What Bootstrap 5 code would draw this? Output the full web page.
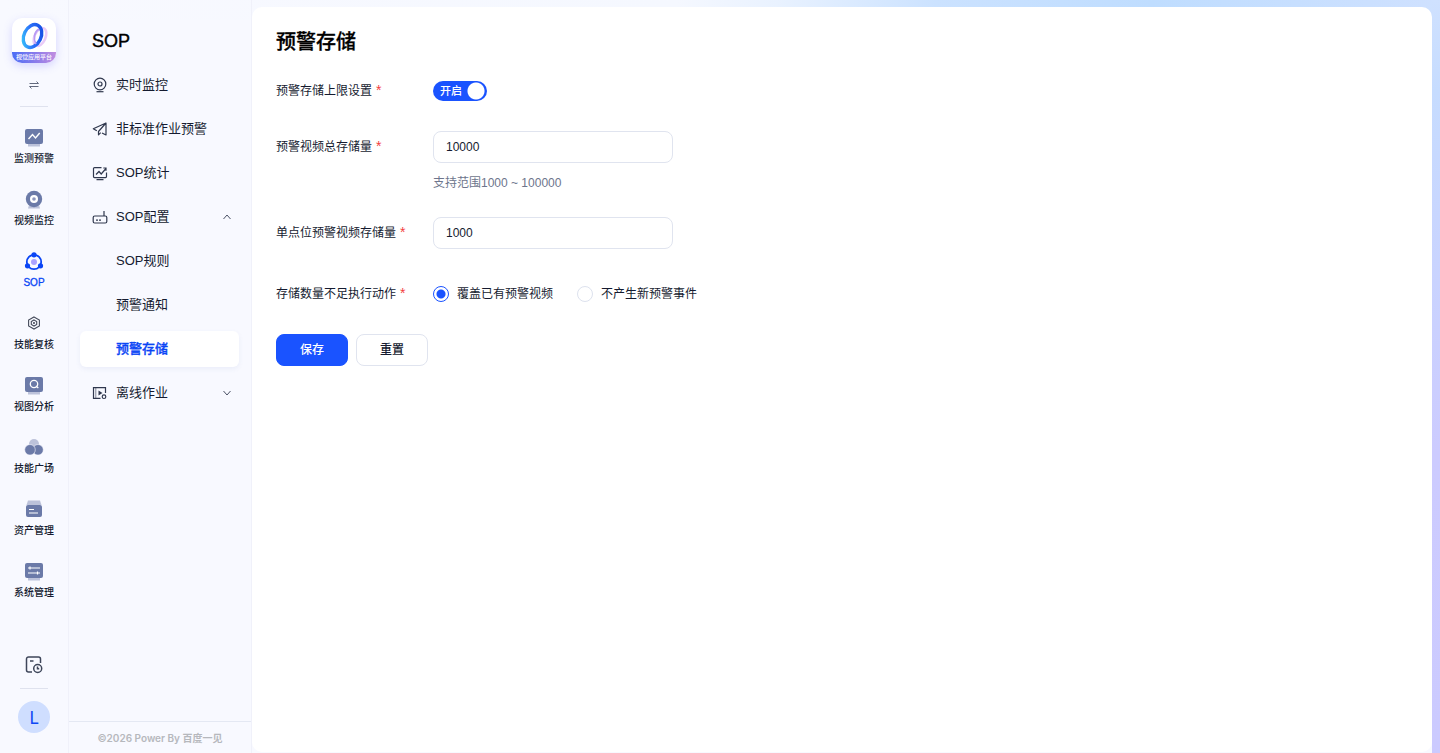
<!DOCTYPE html>
<html lang="zh-CN">
<head>
<meta charset="utf-8">
<meta name="viewport" content="width=device-width, initial-scale=1">
<title>预警存储</title>
<link href="https://cdn.jsdelivr.net/npm/bootstrap@5.3.0/dist/css/bootstrap.min.css" rel="stylesheet">
<style>
:root{--brand:#1a53ff;--brand-ink:#0a45f5;--ink:#151b30;--line:#e4e8f3}
body{font-family:"Liberation Sans","Noto Sans CJK SC",sans-serif;font-size:12px;line-height:20px;color:var(--ink);
background:linear-gradient(180deg,#cfe1ff 0,#c6dcff 12%,#cccbff 60%,#cbcaff 100%) right top/8px 100% no-repeat,
linear-gradient(90deg,#f8f9ff 0,#f5f8ff 47%,#e9f2ff 54%,#cbe2ff 65%,#bfddff 80%,#cfe1ff 100%) top/100% 20px no-repeat,#f8f9ff}
a{color:inherit;text-decoration:none}
svg{display:block;flex:none}
.rail{width:68px;padding-top:18px;padding-bottom:20px}
.logo{width:44px;height:45px;border-radius:10px;background:#fff;overflow:hidden;box-shadow:0 3px 8px #6f6cff40}
.logo-band{height:11px;font-size:6px;line-height:11px;font-weight:500;color:#fff;background:linear-gradient(90deg,#4b6df6,#8c7bea 55%,#c18ee0)}
.rule{width:28px;height:1px;background:#dfe2ee}
.swap{padding:0;border:0;background:none}
.swap-top{margin:16px 0 15px}
.rail-list{margin-top:11px}
.rail-item{height:62px;gap:2px;padding-top:9px;font-size:10px;font-weight:500}
.rail-item.active{color:var(--brand-ink);-webkit-text-stroke:.3px}
.avatar{width:32px;height:32px;margin-top:12px;border-radius:50%;background:#cfdeff;color:#0d47f5;font:18px/32px "Noto Sans","Noto Sans CJK SC",sans-serif;border:0;padding:0}
.side,.sheet{min-width:0}
.side{width:184px;border:solid #f0f1fa;border-width:0 1px}
.side-title{font-size:18px;line-height:28px;font-weight:400;color:#000;margin:27px 0 12px 23px;-webkit-text-stroke:.4px}
.menu-item{height:36px;margin:0 12px 0 11px;padding:0 7px 0 12px;gap:8px;font-size:13px;border-radius:6px}
.menu-item.sub{padding-left:36px}
.menu-item.active{background:#fff;color:var(--brand-ink);font-weight:500;box-shadow:0 2px 5px #5068b414;-webkit-text-stroke:.3px}
.foot{height:32px;border-top:1px solid var(--line);font:600 10px/32px Inter,"Noto Sans CJK SC",sans-serif;color:#b6b8bd}
.sheet{background:#fff;border-radius:10px;margin:7px 8px 1px 0;padding:20px 24px}
.sheet h1{font-size:20px;line-height:30px;font-weight:500;color:#000;margin:0 0 18px;-webkit-text-stroke:.3px}
.form-row{margin-bottom:24px}
.form-row.tall{margin-bottom:29px}
.row-label{width:157px;height:32px;line-height:32px}
.req{color:#f33e3e;margin-left:4px;font-size:14px;line-height:1}
.field-box.form-control{width:240px;height:32px;font-size:12px;line-height:20px;padding:5px 12px;border:1px solid #e0e4ef;border-radius:8px;color:var(--ink)}
.hint{color:#6d758c;margin-top:10px}
.toggle{width:54px;height:20px;margin:6px 0}
.toggle input{appearance:none;width:54px;height:20px;border-radius:10px;margin:0;display:block;background:#b8becf radial-gradient(circle at 11px 10px,#fff 8px,#fff0 9px)}
.toggle input:checked{background:var(--brand) radial-gradient(circle at 43px 10px,#fff 8px,#fff0 9px)}
.toggle span{left:7px;top:0;font-size:11px;color:#fff;font-weight:500;pointer-events:none}
.choice{gap:8px;height:32px;margin-right:24px}
.choice input{appearance:none;width:16px;height:16px;margin:0;border:1px solid #dde2ee;border-radius:50%}
.choice input:checked{border-color:var(--brand);background:radial-gradient(circle,var(--brand) 4px,#fff 5px)}
.act.btn{width:72px;height:32px;font-size:12px;line-height:20px;padding:5px;border-radius:8px;font-weight:500}
.act-main.btn{background:var(--brand);border-color:var(--brand);color:#fff}
.act-alt.btn{background:#fff;border-color:#e0e4ef;color:var(--ink)}
</style>
</head>
<body>
<div class="d-flex min-vh-100">
<nav class="rail d-flex flex-column align-items-center flex-shrink-0" aria-label="应用">
  <a href="#" class="logo d-flex flex-column justify-content-between text-center">
    <svg width="44" height="34" viewBox="0 0 44 34" fill="none"><defs><linearGradient id="lg" x1="0" y1="1" x2="1" y2="0"><stop stop-color="#37d0fa"/><stop offset=".45" stop-color="#2c72fa"/><stop offset="1" stop-color="#1149df"/></linearGradient></defs><ellipse cx="28" cy="19" rx="5.500" ry="9.500" transform="rotate(24 28 19)" stroke="#e9cbf7" stroke-width="2.600"/><ellipse cx="20.500" cy="18" rx="8.500" ry="12" transform="rotate(26 20.500 18)" stroke="url(#lg)" stroke-width="3.400"/><path d="M27 11c-5 3-6 10-3 15" stroke="#b79cf3" stroke-width="1.600"/></svg>
    <span class="logo-band">视觉应用平台</span>
  </a>
  <button class="swap swap-top" type="button" aria-label="切换"><svg width="12" height="12" viewBox="0 0 12 12" fill="none" stroke="#636a7e" stroke-width="1"><path d="M1.500 4.500h9L8.500 2.500M10.500 7.500h-9l2 2"/></svg></button>
  <div class="rule"></div>
  <div class="rail-list">
    <a href="#" class="rail-item d-flex flex-column align-items-center"><svg width="20" height="20" viewBox="0 0 20 20" fill="none"><path d="M4 17h12v2.500H4z" fill="#bcc2da"/><rect x="1" y="2" width="18" height="15" rx="2" fill="#6b7aa8"/><path d="m4.500 12 4-4.500 3 3.500 4.200-5" stroke="#fff" stroke-width="1.400"/></svg>监测预警</a>
    <a href="#" class="rail-item d-flex flex-column align-items-center"><svg width="20" height="20" viewBox="0 0 20 20"><path d="M5 16h10l1 3.500H4z" fill="#bcc2da"/><circle cx="10" cy="10" r="8.200" fill="#6b7aa8"/><circle cx="10" cy="10" r="4" fill="#fff"/><circle cx="10" cy="10" r="1.800" fill="#8d97bd"/></svg>视频监控</a>
    <a href="#" class="rail-item active d-flex flex-column align-items-center" aria-current="page"><svg width="20" height="20" viewBox="0 0 20 20"><circle cx="10" cy="11" r="7.200" fill="none" stroke="#0a45f5" stroke-width="1.800"/><circle cx="10" cy="11" r="3" fill="#aaa2ff"/><g fill="#0a45f5"><circle cx="10" cy="3.800" r="2.600"/><circle cx="3.500" cy="14.800" r="2.600"/><circle cx="16.500" cy="14.800" r="2.600"/></g></svg>SOP</a>
    <a href="#" class="rail-item d-flex flex-column align-items-center"><svg width="20" height="20" viewBox="0 0 20 20" fill="none" stroke="#454b5b" stroke-width="1.100"><path d="m10 4 5.400 3v6L10 16l-5.400-3V7z"/><path d="m10 7 2.700 1.500v3L10 13l-2.700-1.500v-3z"/><circle cx="10" cy="10" r=".5"/></svg>技能复核</a>
    <a href="#" class="rail-item d-flex flex-column align-items-center"><svg width="20" height="20" viewBox="0 0 20 20" fill="none"><path d="M4 17h12v2.500H4z" fill="#bcc2da"/><rect x="1" y="2" width="18" height="15" rx="2" fill="#6b7aa8"/><circle cx="10" cy="9" r="3.700" stroke="#fff" stroke-width="1.300"/><path d="m12 11 2.300 2" stroke="#fff" stroke-width="1.300"/></svg>视图分析</a>
    <a href="#" class="rail-item d-flex flex-column align-items-center"><svg width="20" height="20" viewBox="0 0 20 20"><circle cx="10" cy="7" r="5" fill="#bcc2da"/><circle cx="14" cy="12.800" r="5.300" fill="#6b7aa8" stroke="#f8f9ff" stroke-width=".6"/><circle cx="6" cy="12.800" r="5.300" fill="#6b7aa8" stroke="#f8f9ff" stroke-width=".6"/></svg>技能广场</a>
    <a href="#" class="rail-item d-flex flex-column align-items-center"><svg width="20" height="20" viewBox="0 0 20 20" fill="none"><path d="M4 1.500h12L17.500 6h-15z" fill="#bcc2da"/><rect x="2" y="6" width="16" height="12" rx="2" fill="#6b7aa8"/><path d="M5 10.500h5M5 14h9" stroke="#fff" stroke-width="1.200"/></svg>资产管理</a>
    <a href="#" class="rail-item d-flex flex-column align-items-center"><svg width="20" height="20" viewBox="0 0 20 20" fill="none"><path d="M4 17h12v2.500H4z" fill="#bcc2da"/><rect x="1" y="2" width="18" height="15" rx="2" fill="#6b7aa8"/><path d="M4 7h12M4 12h12M6 5.500v3M13.500 10.500v3" stroke="#fff" stroke-width="1.200"/></svg>系统管理</a>
  </div>
  <button class="swap mt-auto mb-3" type="button" aria-label="记录"><svg width="18" height="16" viewBox="0 0 18 16" overflow="visible" fill="none" stroke="#3e465a" stroke-width="1.500"><path d="M7 16H3.500a2 2 0 0 1-2-2V3a2 2 0 0 1 2-2h10a2 2 0 0 1 2 2v4M5 5h3.500"/><circle cx="12.700" cy="12.500" r="4"/><path d="M12.500 10.500v2.200h1.700"/></svg></button>
  <div class="rule"></div>
  <button class="avatar" type="button">L</button>
</nav>
<aside class="side d-flex flex-column flex-shrink-0">
  <h2 class="side-title">SOP</h2>
  <nav class="d-flex flex-column gap-2" aria-label="SOP">
    <a href="#" class="menu-item d-flex align-items-center"><svg width="16" height="16" viewBox="0 0 16 16" fill="none" stroke="#30384e" stroke-width="1.200"><circle cx="8" cy="7" r="5.800"/><circle cx="8" cy="7" r="2"/><path d="M4.500 14.700h7"/></svg>实时监控</a>
    <a href="#" class="menu-item d-flex align-items-center"><svg width="16" height="16" viewBox="0 0 16 16" fill="none" stroke="#30384e" stroke-width="1.200" stroke-linejoin="round"><path d="M4.800 9.800 1.300 7.800 14 2v12l-4-2M14 2 6.500 10.500v3.300l2.200-2.200"/></svg>非标准作业预警</a>
    <a href="#" class="menu-item d-flex align-items-center"><svg width="16" height="16" viewBox="0 0 16 16" fill="none" stroke="#30384e" stroke-width="1.200"><path d="M9.500 2.600h-7a1 1 0 0 0-1 1v8a1 1 0 0 0 1 1h11a1 1 0 0 0 1-1V7.500M4.500 14.700h7M4 9.500l3-3 2.200 2.500L14 3.500M11.300 3H14v2.700"/></svg>SOP统计</a>
    <a href="#" class="menu-item d-flex align-items-center" aria-expanded="true"><svg width="16" height="16" viewBox="0 0 16 16" fill="none" stroke="#30384e" stroke-width="1.200"><rect x="1.200" y="7" width="13.600" height="7" rx="1.500"/><path d="M12 7V2M4 11.200h2M7 11.200h2"/></svg><span class="flex-grow-1">SOP配置</span><svg width="10" height="10" viewBox="0 0 10 10" fill="none" stroke="#4c5367"><path d="m1.500 7 3.500-4 3.500 4"/></svg></a>
    <a href="#" class="menu-item sub d-flex align-items-center">SOP规则</a>
    <a href="#" class="menu-item sub d-flex align-items-center">预警通知</a>
    <a href="#" class="menu-item sub active d-flex align-items-center" aria-current="page">预警存储</a>
    <a href="#" class="menu-item d-flex align-items-center" aria-expanded="false"><svg width="16" height="16" viewBox="0 0 16 16" fill="none" stroke="#30384e" stroke-width="1.200"><path d="M8.500 13.400h-7V2.600h12V8"/><path d="M3.800 2.600v10.800" stroke-width=".6"/><path d="m6.500 5.500 4 2.500-4 2.500z" fill="#30384e" stroke="none"/><circle cx="12" cy="11.700" r="1.800"/></svg><span class="flex-grow-1">离线作业</span><svg width="10" height="10" viewBox="0 0 10 10" fill="none" stroke="#4c5367"><path d="m1.500 3 3.500 4 3.500-4"/></svg></a>
  </nav>
  <footer class="foot text-center mt-auto">©2026 Power By 百度一见</footer>
</aside>
<main class="sheet flex-grow-1">
  <h1>预警存储</h1>
  <form>
    <div class="form-row d-flex">
      <label class="row-label" for="limit">预警存储上限设置<span class="req">*</span></label>
      <div class="toggle position-relative"><input type="checkbox" role="switch" id="limit" checked><span class="position-absolute">开启</span></div>
    </div>
    <div class="form-row d-flex">
      <label class="row-label" for="total">预警视频总存储量<span class="req">*</span></label>
      <div><input class="form-control field-box" type="text" id="total" value="10000"><div class="hint">支持范围1000 ~ 100000</div></div>
    </div>
    <div class="form-row tall d-flex">
      <label class="row-label" for="single">单点位预警视频存储量<span class="req">*</span></label>
      <input class="form-control field-box" type="text" id="single" value="1000">
    </div>
    <div class="form-row d-flex" role="radiogroup" aria-labelledby="actlabel">
      <span class="row-label" id="actlabel">存储数量不足执行动作<span class="req">*</span></span>
      <label class="choice d-flex align-items-center"><input type="radio" name="action" checked>覆盖已有预警视频</label>
      <label class="choice d-flex align-items-center"><input type="radio" name="action">不产生新预警事件</label>
    </div>
    <div class="d-flex gap-2">
      <button type="button" class="btn act act-main">保存</button>
      <button type="reset" class="btn act act-alt">重置</button>
    </div>
  </form>
</main>
</div>
<script src="https://cdn.jsdelivr.net/npm/bootstrap@5.3.0/dist/js/bootstrap.bundle.min.js"></script>
</body>
</html>
